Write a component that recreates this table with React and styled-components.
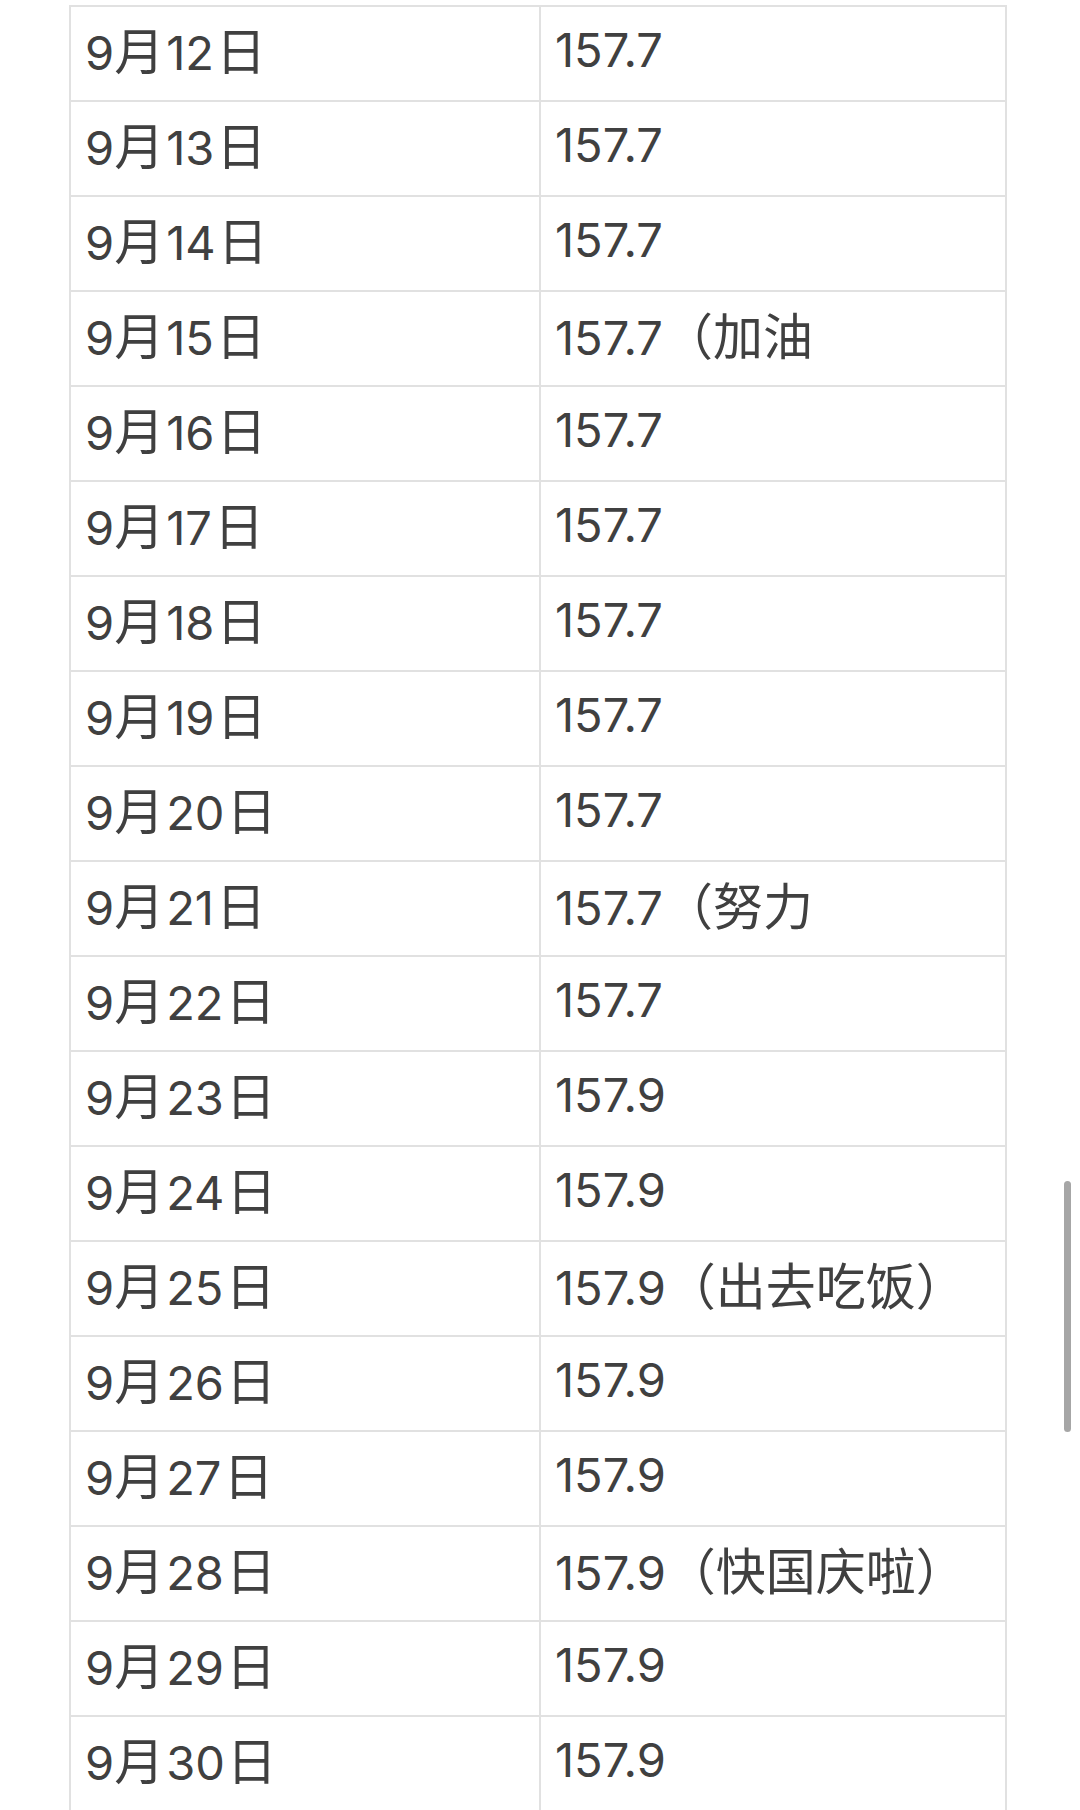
import React from 'react'
import styled, { createGlobalStyle } from 'styled-components'

const GlobalStyle = createGlobalStyle`
    html, body {
        margin: 0;
        padding: 0;
        background: #ffffff;
    }
    body {
        font-family: Inter, "Noto Sans CJK SC", sans-serif;
        color: #404040;
        overflow: hidden;
    }
`

const Page = styled.div`
    width: 1080px;
    height: 1810px;
    overflow: hidden;
    padding-top: 5px;
    box-sizing: border-box;
`

const Table = styled.div`
    margin-left: 69px;
    width: 938px;
    border-left: 2px solid #e1e1e1;
    border-right: 2px solid #e1e1e1;
    box-sizing: border-box;
`

const Row = styled.div`
    display: grid;
    grid-template-columns: 468px 1fr;
    height: 95px;
    border-top: 2px solid #e1e1e1;
    box-sizing: border-box;
`

const Cell = styled.div`
    display: flex;
    align-items: center;
    padding: 0 0 8px 14px;
    border-left: ${p => (p.$divider ? '2px solid #e1e1e1' : 'none')};
`

const Text = styled.span`
    font-size: 47px;
    line-height: 1;
    white-space: nowrap;
`

const Han = styled.span`
    font-family: "Noto Sans CJK SC", sans-serif;
    font-size: 50px;
`

const Day = styled.span`
    margin: 0 2px;
`

const Scrollbar = styled.div`
    position: fixed;
    left: 1064px;
    top: 1181px;
    width: 7px;
    height: 251px;
    border-radius: 4px;
    background: #a6a6a6;
`

const rows = [
    [12, '157.7'],
    [13, '157.7'],
    [14, '157.7'],
    [15, '157.7', '（加油'],
    [16, '157.7'],
    [17, '157.7'],
    [18, '157.7'],
    [19, '157.7'],
    [20, '157.7'],
    [21, '157.7', '（努力'],
    [22, '157.7'],
    [23, '157.9'],
    [24, '157.9'],
    [25, '157.9', '（出去吃饭）'],
    [26, '157.9'],
    [27, '157.9'],
    [28, '157.9', '（快国庆啦）'],
    [29, '157.9'],
    [30, '157.9'],
]

const App = () => {
  return (
    <Page>
        <GlobalStyle />
        <Table>
            {rows.map(([day, weight, note]) => (
                <Row key={day}>
                    <Cell>
                        <Text>9<Han>月</Han><Day>{day}</Day><Han>日</Han></Text>
                    </Cell>
                    <Cell $divider>
                        <Text>{weight}{note && <Han>{note}</Han>}</Text>
                    </Cell>
                </Row>
            ))}
        </Table>
        <Scrollbar />
    </Page>
  )
}

export default App
